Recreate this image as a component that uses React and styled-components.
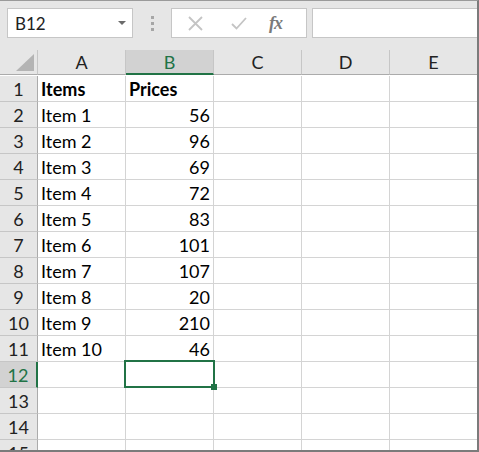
import React from "react";
import styled, { createGlobalStyle } from "styled-components";

const Global = createGlobalStyle`
  html, body { margin: 0; padding: 0; background: #e6e6e6; overflow: hidden; }
  * { box-sizing: border-box; }
`;

const Frame = styled.div`
  width: 479px;
  height: 452px;
  overflow: hidden;
  background: #e6e6e6;
  border-top: 1px solid #9a9a9a;
  border-right: 2px solid #7b7b7b;
  border-bottom: 2px solid #7b7b7b;
  font-family: Lato, "Liberation Sans", sans-serif;
  color: #000;
`;

const Toolbar = styled.div`
  height: 49px;
  display: flex;
  align-items: flex-start;
  padding: 7px 0 0 7px;
`;

const NameBox = styled.div`
  width: 126px;
  height: 30px;
  background: #fff;
  border: 1px solid #c6c6c6;
  display: flex;
  align-items: center;
  justify-content: space-between;
  padding: 0 6px 0 7px;
  font-size: 17px;
  color: #222;
`;

const Caret = styled.span`
  width: 0;
  height: 0;
  border-left: 4px solid transparent;
  border-right: 4px solid transparent;
  border-top: 4px solid #6b6b6b;
`;

const Dots = styled.div`
  width: 38px;
  height: 30px;
  display: flex;
  flex-direction: column;
  align-items: center;
  justify-content: center;
  gap: 3px;
  & > span { width: 3px; height: 3px; background: #a6a6a6; }
`;

const ButtonBox = styled.div`
  width: 136px;
  height: 30px;
  background: #fff;
  border: 1px solid #c6c6c6;
  display: flex;
  align-items: center;
  padding-left: 16px;
`;

const IconSlot = styled.div`
  width: ${p => p.w}px;
  display: flex;
  align-items: center;
`;

const Fx = styled.span`
  font-family: "Liberation Serif", serif;
  font-style: italic;
  font-weight: bold;
  font-size: 18px;
  color: #7a7a7a;
  letter-spacing: -1px;
`;

const FormulaInput = styled.div`
  flex: 1;
  height: 30px;
  margin-left: 5px;
  background: #fff;
  border: 1px solid #c6c6c6;
  border-right: none;
`;

const Grid = styled.div`
  display: grid;
  grid-template-columns: 38px repeat(5, 88px) 1fr;
  grid-auto-rows: 26px;
  background: #fff;
`;

const Corner = styled.div`
  height: 25px;
  background: #e6e6e6;
  border-right: 1px solid #c6c6c6;
  border-bottom: 1px solid #ababab;
  display: flex;
  align-items: flex-end;
  justify-content: flex-end;
  padding: 0 3px 3px 0;
`;

const ColHead = styled.div`
  height: 25px;
  background: ${p => (p.active ? "#d2d2d2" : "#e6e6e6")};
  border-right: 1px solid #c6c6c6;
  border-bottom: ${p => (p.active ? "2px solid #217346" : "1px solid #ababab")};
  color: ${p => (p.active ? "#217346" : "#222")};
  display: flex;
  align-items: center;
  justify-content: center;
  font-size: 18px;
  padding-top: ${p => (p.active ? "1px" : "0")};
`;

const RowHead = styled.div`
  background: ${p => (p.active ? "#d2d2d2" : "#e6e6e6")};
  border-right: ${p => (p.active ? "2px solid #217346" : "1px solid #ababab")};
  border-bottom: 1px solid #c6c6c6;
  color: ${p => (p.active ? "#217346" : "#222")};
  display: flex;
  align-items: center;
  justify-content: center;
  font-size: 18px;
`;

const Cell = styled.div`
  position: relative;
  border-right: 1px solid #d4d4d4;
  border-bottom: 1px solid #d4d4d4;
  display: flex;
  align-items: center;
  justify-content: ${p => (p.num ? "flex-end" : "flex-start")};
  padding: 0 3px;
  font-size: 18px;
  font-weight: ${p => (p.bold ? 700 : 400)};
  white-space: nowrap;
`;

const Selection = styled.div`
  position: absolute;
  z-index: 5;
  left: -2px;
  top: -2px;
  right: -2px;
  bottom: -1px;
  border: 2px solid #217346;
  pointer-events: none;
`;

const Handle = styled.div`
  position: absolute;
  right: -4px;
  bottom: -4px;
  width: 6px;
  height: 6px;
  background: #217346;
`;

const data = [
  ["Item 1", 56], ["Item 2", 96], ["Item 3", 69], ["Item 4", 72], ["Item 5", 83],
  ["Item 6", 101], ["Item 7", 107], ["Item 8", 20], ["Item 9", 210], ["Item 10", 46],
];

export default function App() {
  const rows = [];
  for (let r = 1; r <= 15; r++) {
    let a = "", b = "", bold = false;
    if (r === 1) { a = "Items"; b = "Prices"; bold = true; }
    else if (r <= 11) { a = data[r - 2][0]; b = data[r - 2][1]; }
    const active = r === 12;
    rows.push(
      <React.Fragment key={r}>
        <RowHead active={active}>{r}</RowHead>
        <Cell bold={bold}>{a}</Cell>
        <Cell bold={bold} num={!bold}>
          {b}
          {active && (<Selection><Handle /></Selection>)}
        </Cell>
        <Cell />
        <Cell />
        <Cell />
        <Cell />
      </React.Fragment>
    );
  }
  return (
    <>
      <Global />
      <Frame>
        <Toolbar>
          <NameBox>
            <span>B12</span>
            <Caret />
          </NameBox>
          <Dots><span /><span /><span /></Dots>
          <ButtonBox>
            <IconSlot w={43}>
              <svg width="15" height="15" viewBox="0 0 15 15">
                <path d="M1 1 L14 14 M14 1 L1 14" stroke="#c4c4c4" strokeWidth="1.8" fill="none" />
              </svg>
            </IconSlot>
            <IconSlot w={38}>
              <svg width="16" height="13" viewBox="0 0 16 13">
                <path d="M1 7 L5.5 11.5 L15 1" stroke="#c4c4c4" strokeWidth="1.8" fill="none" />
              </svg>
            </IconSlot>
            <IconSlot w={30}>
              <Fx>fx</Fx>
            </IconSlot>
          </ButtonBox>
          <FormulaInput />
        </Toolbar>
        <Grid>
          <Corner>
            <svg width="18" height="17" viewBox="0 0 18 17">
              <path d="M18 0 L18 17 L0 17 Z" fill="#b4b4b4" />
            </svg>
          </Corner>
          <ColHead>A</ColHead>
          <ColHead active>B</ColHead>
          <ColHead>C</ColHead>
          <ColHead>D</ColHead>
          <ColHead>E</ColHead>
          <ColHead />
          {rows}
        </Grid>
      </Frame>
    </>
  );
}
